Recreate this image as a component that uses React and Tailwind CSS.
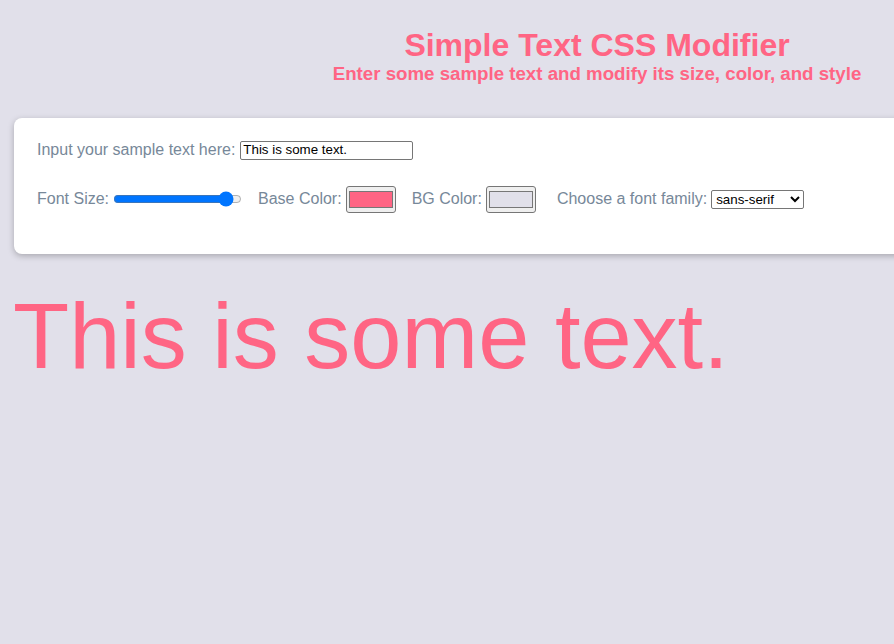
import React, { useState } from "react";

export default function App() {
  const [text, setText] = useState("This is some text.");
  const [size, setSize] = useState(93);
  const [color, setColor] = useState("#ff6584");
  const [bg, setBg] = useState("#e1e0ea");
  const [family, setFamily] = useState("sans-serif");

  return (
    <div
      className="w-[894px] h-[644px] overflow-hidden bg-[#e1e0ea]"
      style={{ fontFamily: '"Liberation Sans", Arial, sans-serif' }}
    >
      <div className="w-[1194px]">
        <header className="flex flex-col items-center pt-[27px] text-[#ff6584] font-bold">
          <h1 className="text-[32px] leading-[36px]">Simple Text CSS Modifier</h1>
          <h2 className="text-[18.7px] leading-[22px]">
            Enter some sample text and modify its size, color, and style
          </h2>
        </header>

        <section className="mx-[14px] mt-[33px] h-[136px] rounded-[8px] bg-white px-[23px] pt-[22px] shadow-[0_2px_6px_rgba(0,0,0,0.25)] text-[16px] text-[#778899]">
          <div className="flex items-center h-[20px]">
            <label className="mr-[5px]">Input your sample text here:</label>
            <input
              type="text"
              value={text}
              onChange={(e) => setText(e.target.value)}
              className="w-[173px] h-[19px] border border-[#767676] rounded-[2px] bg-white px-[2px] text-[13.33px] text-black"
              style={{ fontFamily: '"Liberation Sans", Arial, sans-serif' }}
            />
          </div>
          <div className="flex items-center mt-[24px] h-[30px]">
            <label className="mr-[4px]">Font Size:</label>
            <input
              type="range"
              min="0"
              max="100"
              value={size}
              onChange={(e) => setSize(e.target.value)}
              className="w-[129px] accent-[#0075ff] mr-[16px]"
            />
            <label className="mr-[4px]">Base Color:</label>
            <input
              type="color"
              value={color}
              onChange={(e) => setColor(e.target.value)}
              className="w-[50px] h-[27px] border border-[#767676] rounded-[3px] bg-[#efefef] mr-[16px]"
            />
            <label className="mr-[4px]">BG Color:</label>
            <input
              type="color"
              value={bg}
              onChange={(e) => setBg(e.target.value)}
              className="w-[50px] h-[27px] border border-[#767676] rounded-[3px] bg-[#efefef] mr-[21px]"
            />
            <label className="mr-[4px]">Choose a font family:</label>
            <select
              value={family}
              onChange={(e) => setFamily(e.target.value)}
              className="w-[93px] h-[19px] border border-[#767676] rounded-[2px] bg-white text-[13.33px] text-black"
              style={{ fontFamily: '"Liberation Sans", Arial, sans-serif' }}
            >
              <option value="sans-serif">sans-serif</option>
              <option value="serif">serif</option>
              <option value="monospace">monospace</option>
            </select>
          </div>
        </section>

        <p className="mt-[29px] ml-[13px] text-[92px] leading-[106px] text-[#ff6584]">
          {text}
        </p>
      </div>
    </div>
  );
}
